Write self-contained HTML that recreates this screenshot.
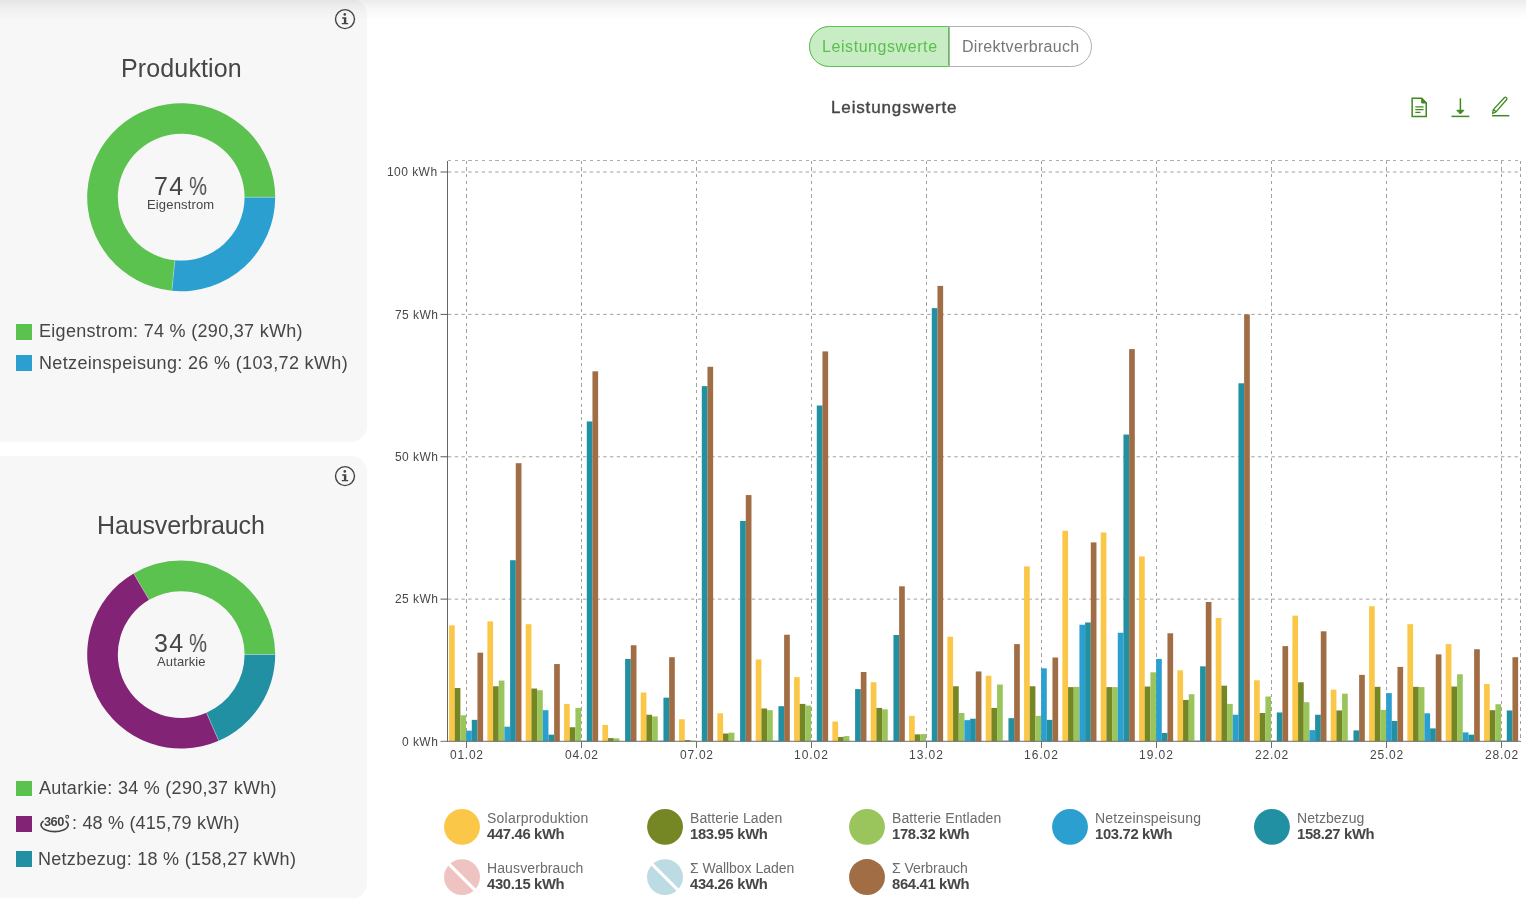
<!DOCTYPE html>
<html lang="de"><head><meta charset="utf-8"><title>Leistungswerte</title>
<style>
html,body{margin:0;padding:0;background:#fff;overflow:hidden;}
body{width:1526px;height:898px;overflow:hidden;position:relative;font-family:"Liberation Sans", Arial, sans-serif;}
.card{position:absolute;left:-20px;width:387px;background:#f7f7f7;border-radius:16px;}
.t{position:absolute;white-space:pre;line-height:normal;will-change:transform;}
.bm{display:inline-block;width:0;height:0;}
.info{position:absolute;}
svg{position:absolute;left:0;top:0;overflow:visible;}
.toggle{position:absolute;left:809px;top:26px;width:283px;height:41px;box-sizing:border-box;border:1px solid #b0b0b0;border-radius:20.5px;background:#fff;}
.toggle .on{position:absolute;left:-1px;top:-1px;width:140px;height:41px;box-sizing:border-box;border:1px solid #5bc04f;border-radius:20.5px 1.5px 1.5px 20.5px;background:#c8ecc3;}
.toggle .sep{position:absolute;left:139px;top:0;width:1px;height:39px;background:#b0b0b0;}
.topshade{position:absolute;left:0;top:0;width:100%;height:20px;background:linear-gradient(rgba(0,0,0,0.08),rgba(0,0,0,0.045) 30%,rgba(0,0,0,0.02) 60%,rgba(0,0,0,0));}
.sq{position:absolute;left:16px;width:16px;height:16px;}
</style></head><body>
<div class="card" style="top:-1px;height:443px"></div>
<div class="card" style="top:456px;height:443px"></div>
<div class="toggle"><div class="on"></div><div class="sep"></div></div>

<svg width="1526" height="898" viewBox="0 0 1526 898">
<g id="donut1">
<path d="M275.20,197.20 A94,94 0 1 0 171.86,290.74 L174.90,260.29 A63.4,63.4 0 1 1 244.60,197.20 Z" fill="#5bc14f"/>
<path d="M171.86,290.74 A94,94 0 0 0 275.20,197.20 L244.60,197.20 A63.4,63.4 0 0 1 174.90,260.29 Z" fill="#2b9fcf"/>
<line x1="244.60" y1="197.20" x2="275.20" y2="197.20" stroke="#fff" stroke-opacity="0.3" stroke-width="1"/>
<line x1="174.90" y1="260.29" x2="171.86" y2="290.74" stroke="#fff" stroke-opacity="0.3" stroke-width="1"/>
</g>
<g id="donut2">
<path d="M275.20,654.55 A94,94 0 0 0 133.63,573.47 L149.12,599.87 A63.4,63.4 0 0 1 244.60,654.55 Z" fill="#5bc14f"/>
<path d="M133.63,573.47 A94,94 0 0 0 218.68,740.75 L206.48,712.69 A63.4,63.4 0 0 1 149.12,599.87 Z" fill="#832375"/>
<path d="M218.68,740.75 A94,94 0 0 0 275.20,654.55 L244.60,654.55 A63.4,63.4 0 0 1 206.48,712.69 Z" fill="#2190a2"/>
<line x1="244.60" y1="654.55" x2="275.20" y2="654.55" stroke="#fff" stroke-opacity="0.3" stroke-width="1"/>
<line x1="149.12" y1="599.87" x2="133.63" y2="573.47" stroke="#fff" stroke-opacity="0.3" stroke-width="1"/>
<line x1="206.48" y1="712.69" x2="218.68" y2="740.75" stroke="#fff" stroke-opacity="0.3" stroke-width="1"/>
</g>
<g id="grid">
<g>
<line x1="448.0" x2="1520.5" y1="599.12" y2="599.12" stroke="#a0a0a0" stroke-dasharray="3.375,3.375"/>
<line x1="448.0" x2="1520.5" y1="456.75" y2="456.75" stroke="#a0a0a0" stroke-dasharray="3.375,3.375"/>
<line x1="448.0" x2="1520.5" y1="314.38" y2="314.38" stroke="#a0a0a0" stroke-dasharray="3.375,3.375"/>
<line x1="448.0" x2="1520.5" y1="172.00" y2="172.00" stroke="#a0a0a0" stroke-dasharray="3.375,3.375"/>
</g><g shape-rendering="crispEdges">
<line x1="448.0" x2="1520.5" y1="160.5" y2="160.5" stroke="#a0a0a0" stroke-opacity="0.85" stroke-dasharray="3.375,3.375"/>
<line x1="1520.5" x2="1520.5" y1="160.5" y2="741.5" stroke="#a0a0a0" stroke-dasharray="3.375,3.375"/>
<line x1="466.50" x2="466.50" y1="160.5" y2="741.5" stroke="#a0a0a0" stroke-dasharray="3.375,3.375"/>
<line x1="581.50" x2="581.50" y1="160.5" y2="741.5" stroke="#a0a0a0" stroke-dasharray="3.375,3.375"/>
<line x1="696.50" x2="696.50" y1="160.5" y2="741.5" stroke="#a0a0a0" stroke-dasharray="3.375,3.375"/>
<line x1="811.50" x2="811.50" y1="160.5" y2="741.5" stroke="#a0a0a0" stroke-dasharray="3.375,3.375"/>
<line x1="926.50" x2="926.50" y1="160.5" y2="741.5" stroke="#a0a0a0" stroke-dasharray="3.375,3.375"/>
<line x1="1041.50" x2="1041.50" y1="160.5" y2="741.5" stroke="#a0a0a0" stroke-dasharray="3.375,3.375"/>
<line x1="1156.50" x2="1156.50" y1="160.5" y2="741.5" stroke="#a0a0a0" stroke-dasharray="3.375,3.375"/>
<line x1="1271.50" x2="1271.50" y1="160.5" y2="741.5" stroke="#a0a0a0" stroke-dasharray="3.375,3.375"/>
<line x1="1386.50" x2="1386.50" y1="160.5" y2="741.5" stroke="#a0a0a0" stroke-dasharray="3.375,3.375"/>
<line x1="1501.50" x2="1501.50" y1="160.5" y2="741.5" stroke="#a0a0a0" stroke-dasharray="3.375,3.375"/>
</g>
</g>
<g id="bars">
<rect x="449.06" y="625.32" width="5.68" height="116.18" fill="#fac748"/>
<rect x="454.74" y="687.97" width="5.68" height="53.53" fill="#758725"/>
<rect x="460.42" y="715.30" width="5.68" height="26.20" fill="#99c55c"/>
<rect x="466.10" y="730.68" width="5.68" height="10.82" fill="#2b9fcf"/>
<rect x="471.78" y="719.86" width="5.68" height="21.64" fill="#2190a2"/>
<rect x="477.46" y="652.66" width="5.68" height="88.84" fill="#a06d45"/>
<rect x="487.39" y="621.34" width="5.68" height="120.16" fill="#fac748"/>
<rect x="493.07" y="686.26" width="5.68" height="55.24" fill="#758725"/>
<rect x="498.75" y="680.56" width="5.68" height="60.94" fill="#99c55c"/>
<rect x="504.43" y="726.69" width="5.68" height="14.81" fill="#2b9fcf"/>
<rect x="510.11" y="560.23" width="5.68" height="181.27" fill="#2190a2"/>
<rect x="515.79" y="463.19" width="5.68" height="278.31" fill="#a06d45"/>
<rect x="525.73" y="624.18" width="5.68" height="117.32" fill="#fac748"/>
<rect x="531.41" y="688.54" width="5.68" height="52.96" fill="#758725"/>
<rect x="537.09" y="690.25" width="5.68" height="51.25" fill="#99c55c"/>
<rect x="542.77" y="710.18" width="5.68" height="31.32" fill="#2b9fcf"/>
<rect x="548.45" y="734.67" width="5.68" height="6.83" fill="#2190a2"/>
<rect x="554.13" y="664.05" width="5.68" height="77.45" fill="#a06d45"/>
<rect x="564.06" y="703.91" width="5.68" height="37.59" fill="#fac748"/>
<rect x="569.74" y="727.26" width="5.68" height="14.24" fill="#758725"/>
<rect x="575.42" y="707.90" width="5.68" height="33.60" fill="#99c55c"/>
<rect x="581.10" y="740.65" width="5.68" height="0.85" fill="#2b9fcf"/>
<rect x="586.78" y="421.44" width="5.68" height="320.06" fill="#2190a2"/>
<rect x="592.46" y="371.32" width="5.68" height="370.18" fill="#a06d45"/>
<rect x="602.39" y="724.98" width="5.68" height="16.52" fill="#fac748"/>
<rect x="608.07" y="738.08" width="5.68" height="3.42" fill="#758725"/>
<rect x="613.75" y="738.37" width="5.68" height="3.13" fill="#99c55c"/>
<rect x="625.11" y="658.92" width="5.68" height="82.58" fill="#2190a2"/>
<rect x="630.79" y="645.25" width="5.68" height="96.25" fill="#a06d45"/>
<rect x="640.73" y="692.52" width="5.68" height="48.98" fill="#fac748"/>
<rect x="646.41" y="714.73" width="5.68" height="26.77" fill="#758725"/>
<rect x="652.09" y="716.44" width="5.68" height="25.06" fill="#99c55c"/>
<rect x="657.77" y="740.65" width="5.68" height="0.85" fill="#2b9fcf"/>
<rect x="663.45" y="697.65" width="5.68" height="43.85" fill="#2190a2"/>
<rect x="669.13" y="657.21" width="5.68" height="84.29" fill="#a06d45"/>
<rect x="679.06" y="719.29" width="5.68" height="22.21" fill="#fac748"/>
<rect x="684.74" y="740.08" width="5.68" height="1.42" fill="#758725"/>
<rect x="690.42" y="740.65" width="5.68" height="0.85" fill="#99c55c"/>
<rect x="701.78" y="386.13" width="5.68" height="355.37" fill="#2190a2"/>
<rect x="707.46" y="366.77" width="5.68" height="374.73" fill="#a06d45"/>
<rect x="717.39" y="713.31" width="5.68" height="28.19" fill="#fac748"/>
<rect x="723.07" y="733.53" width="5.68" height="7.97" fill="#758725"/>
<rect x="728.75" y="732.67" width="5.68" height="8.83" fill="#99c55c"/>
<rect x="740.11" y="520.93" width="5.68" height="220.57" fill="#2190a2"/>
<rect x="745.79" y="495.08" width="5.68" height="246.42" fill="#a06d45"/>
<rect x="755.73" y="659.49" width="5.68" height="82.01" fill="#fac748"/>
<rect x="761.41" y="708.47" width="5.68" height="33.03" fill="#758725"/>
<rect x="767.09" y="710.18" width="5.68" height="31.32" fill="#99c55c"/>
<rect x="772.77" y="740.65" width="5.68" height="0.85" fill="#2b9fcf"/>
<rect x="778.45" y="706.19" width="5.68" height="35.31" fill="#2190a2"/>
<rect x="784.13" y="634.72" width="5.68" height="106.78" fill="#a06d45"/>
<rect x="794.06" y="677.15" width="5.68" height="64.35" fill="#fac748"/>
<rect x="799.74" y="703.91" width="5.68" height="37.59" fill="#758725"/>
<rect x="805.42" y="705.62" width="5.68" height="35.88" fill="#99c55c"/>
<rect x="811.10" y="740.65" width="5.68" height="0.85" fill="#2b9fcf"/>
<rect x="816.78" y="405.50" width="5.68" height="336.00" fill="#2190a2"/>
<rect x="822.46" y="351.39" width="5.68" height="390.11" fill="#a06d45"/>
<rect x="832.39" y="721.57" width="5.68" height="19.93" fill="#fac748"/>
<rect x="838.07" y="736.94" width="5.68" height="4.56" fill="#758725"/>
<rect x="843.75" y="736.09" width="5.68" height="5.41" fill="#99c55c"/>
<rect x="855.11" y="689.11" width="5.68" height="52.39" fill="#2190a2"/>
<rect x="860.79" y="672.02" width="5.68" height="69.48" fill="#a06d45"/>
<rect x="870.73" y="682.27" width="5.68" height="59.23" fill="#fac748"/>
<rect x="876.41" y="707.90" width="5.68" height="33.60" fill="#758725"/>
<rect x="882.09" y="709.32" width="5.68" height="32.18" fill="#99c55c"/>
<rect x="887.77" y="740.65" width="5.68" height="0.85" fill="#2b9fcf"/>
<rect x="893.45" y="635.00" width="5.68" height="106.50" fill="#2190a2"/>
<rect x="899.13" y="586.31" width="5.68" height="155.19" fill="#a06d45"/>
<rect x="909.06" y="715.87" width="5.68" height="25.63" fill="#fac748"/>
<rect x="914.74" y="734.38" width="5.68" height="7.12" fill="#758725"/>
<rect x="920.42" y="734.10" width="5.68" height="7.40" fill="#99c55c"/>
<rect x="926.10" y="740.65" width="5.68" height="0.85" fill="#2b9fcf"/>
<rect x="931.78" y="308.11" width="5.68" height="433.39" fill="#2190a2"/>
<rect x="937.46" y="285.90" width="5.68" height="455.60" fill="#a06d45"/>
<rect x="947.39" y="636.71" width="5.68" height="104.79" fill="#fac748"/>
<rect x="953.07" y="686.26" width="5.68" height="55.24" fill="#758725"/>
<rect x="958.75" y="713.02" width="5.68" height="28.48" fill="#99c55c"/>
<rect x="964.43" y="720.14" width="5.68" height="21.36" fill="#2b9fcf"/>
<rect x="970.11" y="718.72" width="5.68" height="22.78" fill="#2190a2"/>
<rect x="975.79" y="671.45" width="5.68" height="70.05" fill="#a06d45"/>
<rect x="985.73" y="675.72" width="5.68" height="65.78" fill="#fac748"/>
<rect x="991.41" y="707.90" width="5.68" height="33.60" fill="#758725"/>
<rect x="997.09" y="684.55" width="5.68" height="56.95" fill="#99c55c"/>
<rect x="1002.77" y="740.65" width="5.68" height="0.85" fill="#2b9fcf"/>
<rect x="1008.45" y="718.15" width="5.68" height="23.35" fill="#2190a2"/>
<rect x="1014.13" y="644.12" width="5.68" height="97.38" fill="#a06d45"/>
<rect x="1024.06" y="566.38" width="5.68" height="175.12" fill="#fac748"/>
<rect x="1029.74" y="686.26" width="5.68" height="55.24" fill="#758725"/>
<rect x="1035.42" y="715.87" width="5.68" height="25.63" fill="#99c55c"/>
<rect x="1041.10" y="668.32" width="5.68" height="73.18" fill="#2b9fcf"/>
<rect x="1046.78" y="719.86" width="5.68" height="21.64" fill="#2190a2"/>
<rect x="1052.46" y="657.50" width="5.68" height="84.00" fill="#a06d45"/>
<rect x="1062.39" y="530.78" width="5.68" height="210.72" fill="#fac748"/>
<rect x="1068.07" y="687.11" width="5.68" height="54.39" fill="#758725"/>
<rect x="1073.75" y="686.83" width="5.68" height="54.67" fill="#99c55c"/>
<rect x="1079.43" y="624.75" width="5.68" height="116.75" fill="#2b9fcf"/>
<rect x="1085.11" y="622.47" width="5.68" height="119.03" fill="#2190a2"/>
<rect x="1090.79" y="542.40" width="5.68" height="199.10" fill="#a06d45"/>
<rect x="1100.73" y="532.49" width="5.68" height="209.01" fill="#fac748"/>
<rect x="1106.41" y="687.11" width="5.68" height="54.39" fill="#758725"/>
<rect x="1112.09" y="687.11" width="5.68" height="54.39" fill="#99c55c"/>
<rect x="1117.77" y="632.73" width="5.68" height="108.77" fill="#2b9fcf"/>
<rect x="1123.45" y="434.54" width="5.68" height="306.96" fill="#2190a2"/>
<rect x="1129.13" y="349.11" width="5.68" height="392.39" fill="#a06d45"/>
<rect x="1139.06" y="556.41" width="5.68" height="185.09" fill="#fac748"/>
<rect x="1144.74" y="686.54" width="5.68" height="54.96" fill="#758725"/>
<rect x="1150.42" y="672.31" width="5.68" height="69.19" fill="#99c55c"/>
<rect x="1156.10" y="658.92" width="5.68" height="82.58" fill="#2b9fcf"/>
<rect x="1161.78" y="732.96" width="5.68" height="8.54" fill="#2190a2"/>
<rect x="1167.46" y="633.29" width="5.68" height="108.21" fill="#a06d45"/>
<rect x="1177.39" y="670.31" width="5.68" height="71.19" fill="#fac748"/>
<rect x="1183.07" y="699.93" width="5.68" height="41.57" fill="#758725"/>
<rect x="1188.75" y="694.23" width="5.68" height="47.27" fill="#99c55c"/>
<rect x="1194.43" y="740.65" width="5.68" height="0.85" fill="#2b9fcf"/>
<rect x="1200.11" y="666.33" width="5.68" height="75.17" fill="#2190a2"/>
<rect x="1205.79" y="601.97" width="5.68" height="139.53" fill="#a06d45"/>
<rect x="1215.73" y="617.92" width="5.68" height="123.58" fill="#fac748"/>
<rect x="1221.41" y="685.69" width="5.68" height="55.81" fill="#758725"/>
<rect x="1227.09" y="703.91" width="5.68" height="37.59" fill="#99c55c"/>
<rect x="1232.77" y="714.73" width="5.68" height="26.77" fill="#2b9fcf"/>
<rect x="1238.45" y="383.28" width="5.68" height="358.22" fill="#2190a2"/>
<rect x="1244.13" y="314.38" width="5.68" height="427.12" fill="#a06d45"/>
<rect x="1254.06" y="680.28" width="5.68" height="61.22" fill="#fac748"/>
<rect x="1259.74" y="713.02" width="5.68" height="28.48" fill="#758725"/>
<rect x="1265.42" y="696.51" width="5.68" height="44.99" fill="#99c55c"/>
<rect x="1271.10" y="740.65" width="5.68" height="0.85" fill="#2b9fcf"/>
<rect x="1276.78" y="712.46" width="5.68" height="29.04" fill="#2190a2"/>
<rect x="1282.46" y="646.11" width="5.68" height="95.39" fill="#a06d45"/>
<rect x="1292.39" y="615.64" width="5.68" height="125.86" fill="#fac748"/>
<rect x="1298.07" y="682.27" width="5.68" height="59.23" fill="#758725"/>
<rect x="1303.75" y="702.20" width="5.68" height="39.30" fill="#99c55c"/>
<rect x="1309.43" y="730.11" width="5.68" height="11.39" fill="#2b9fcf"/>
<rect x="1315.11" y="714.73" width="5.68" height="26.77" fill="#2190a2"/>
<rect x="1320.79" y="631.30" width="5.68" height="110.20" fill="#a06d45"/>
<rect x="1330.73" y="689.68" width="5.68" height="51.82" fill="#fac748"/>
<rect x="1336.41" y="710.46" width="5.68" height="31.04" fill="#758725"/>
<rect x="1342.09" y="693.66" width="5.68" height="47.84" fill="#99c55c"/>
<rect x="1347.77" y="740.65" width="5.68" height="0.85" fill="#2b9fcf"/>
<rect x="1353.45" y="730.39" width="5.68" height="11.11" fill="#2190a2"/>
<rect x="1359.13" y="674.87" width="5.68" height="66.63" fill="#a06d45"/>
<rect x="1369.06" y="606.24" width="5.68" height="135.26" fill="#fac748"/>
<rect x="1374.74" y="686.83" width="5.68" height="54.67" fill="#758725"/>
<rect x="1380.42" y="709.89" width="5.68" height="31.61" fill="#99c55c"/>
<rect x="1386.10" y="693.09" width="5.68" height="48.41" fill="#2b9fcf"/>
<rect x="1391.78" y="721.00" width="5.68" height="20.50" fill="#2190a2"/>
<rect x="1397.46" y="666.90" width="5.68" height="74.60" fill="#a06d45"/>
<rect x="1407.39" y="624.18" width="5.68" height="117.32" fill="#fac748"/>
<rect x="1413.07" y="686.83" width="5.68" height="54.67" fill="#758725"/>
<rect x="1418.75" y="687.11" width="5.68" height="54.39" fill="#99c55c"/>
<rect x="1424.43" y="713.31" width="5.68" height="28.19" fill="#2b9fcf"/>
<rect x="1430.11" y="728.40" width="5.68" height="13.10" fill="#2190a2"/>
<rect x="1435.79" y="654.37" width="5.68" height="87.13" fill="#a06d45"/>
<rect x="1445.73" y="644.12" width="5.68" height="97.38" fill="#fac748"/>
<rect x="1451.41" y="686.54" width="5.68" height="54.96" fill="#758725"/>
<rect x="1457.09" y="674.30" width="5.68" height="67.20" fill="#99c55c"/>
<rect x="1462.77" y="732.39" width="5.68" height="9.11" fill="#2b9fcf"/>
<rect x="1468.45" y="734.67" width="5.68" height="6.83" fill="#2190a2"/>
<rect x="1474.13" y="649.24" width="5.68" height="92.26" fill="#a06d45"/>
<rect x="1484.06" y="683.98" width="5.68" height="57.52" fill="#fac748"/>
<rect x="1489.74" y="710.18" width="5.68" height="31.32" fill="#758725"/>
<rect x="1495.42" y="704.20" width="5.68" height="37.30" fill="#99c55c"/>
<rect x="1501.10" y="740.65" width="5.68" height="0.85" fill="#2b9fcf"/>
<rect x="1506.78" y="710.46" width="5.68" height="31.04" fill="#2190a2"/>
<rect x="1512.46" y="657.21" width="5.68" height="84.29" fill="#a06d45"/>
</g>
<g id="axes">
<g shape-rendering="crispEdges">
<line x1="447.5" x2="447.5" y1="160.5" y2="742.0" stroke="#666"/>
<line x1="466.50" x2="466.50" y1="741.5" y2="748.0" stroke="#6e6e6e"/>
<line x1="581.50" x2="581.50" y1="741.5" y2="748.0" stroke="#6e6e6e"/>
<line x1="696.50" x2="696.50" y1="741.5" y2="748.0" stroke="#6e6e6e"/>
<line x1="811.50" x2="811.50" y1="741.5" y2="748.0" stroke="#6e6e6e"/>
<line x1="926.50" x2="926.50" y1="741.5" y2="748.0" stroke="#6e6e6e"/>
<line x1="1041.50" x2="1041.50" y1="741.5" y2="748.0" stroke="#6e6e6e"/>
<line x1="1156.50" x2="1156.50" y1="741.5" y2="748.0" stroke="#6e6e6e"/>
<line x1="1271.50" x2="1271.50" y1="741.5" y2="748.0" stroke="#6e6e6e"/>
<line x1="1386.50" x2="1386.50" y1="741.5" y2="748.0" stroke="#6e6e6e"/>
<line x1="1501.50" x2="1501.50" y1="741.5" y2="748.0" stroke="#6e6e6e"/>
</g><g>
<line x1="440.5" x2="1520.5" y1="741.3" y2="741.3" stroke="#707070"/>
<line x1="440.5" x2="447.5" y1="599.12" y2="599.12" stroke="#5a5a5a"/>
<line x1="440.5" x2="447.5" y1="456.75" y2="456.75" stroke="#5a5a5a"/>
<line x1="440.5" x2="447.5" y1="314.38" y2="314.38" stroke="#5a5a5a"/>
<line x1="440.5" x2="447.5" y1="172.00" y2="172.00" stroke="#5a5a5a"/>
</g>
</g>
<g id="legend">
<circle cx="462.00" cy="826.85" r="17.95" fill="#fac748"/>
<circle cx="665.05" cy="826.85" r="17.95" fill="#758725"/>
<circle cx="867.00" cy="826.85" r="17.95" fill="#99c55c"/>
<circle cx="1070.00" cy="826.85" r="17.95" fill="#2b9fcf"/>
<circle cx="1271.96" cy="826.85" r="17.95" fill="#2190a2"/>
<g><circle cx="462.0" cy="877.1" r="17.95" fill="#f0c3c3"/><line x1="449.0" y1="864.1" x2="475.0" y2="890.1" stroke="#fff" stroke-width="3.2"/></g>
<g><circle cx="665.0" cy="877.1" r="17.95" fill="#bcdbe2"/><line x1="652.0" y1="864.1" x2="678.0" y2="890.1" stroke="#fff" stroke-width="3.2"/></g>
<circle cx="867.00" cy="877.05" r="17.95" fill="#a06d45"/>
</g>
<g id="icons" fill="none" stroke="#3f8a1e" stroke-width="1.5">
<path d="M1412.15 98.15 H1421.7 L1426.25 103 V116.5 H1412.15 Z"/>
<path d="M1421.7 98.15 V103 H1426.25 Z" fill="#3f8a1e" stroke-width="1"/>
<path d="M1415.3 106.8 H1423.6 M1415.3 109.6 H1423.6 M1415.3 112.4 H1420.5" stroke-width="1.2"/>
<path d="M1460.4 98.3 V111"/>
<path d="M1456.8 110.3 H1464 L1460.4 114 Z" fill="#3f8a1e" stroke-width="1"/>
<path d="M1451.5 116.4 H1469.3"/>
<path d="M1492 115.7 H1509.3"/>
<path d="M1492.6 113.5 L1493.3 109.6 L1504.3 97.7 A1.5 1.5 0 0 1 1506.5 99.8 L1496.0 111.9 Z M1493.5 109.5 L1496.1 111.7" stroke-width="1.3" stroke-linejoin="round"/>
</g>
<g id="i360" fill="none" stroke="#464646" stroke-width="1.6" stroke-linecap="round">
<path d="M43.1 821.3 A13.6 6.7 0 1 0 66.1 821.3"/>
<circle cx="67.2" cy="816.8" r="1.45" stroke-width="1.1"/>
</g>
</svg>
<span class="t" style="left:44.3px;top:813.9px;font-size:12.8px;font-weight:700;color:#464646;letter-spacing:-0.55px">360</span>

<div class="sq" style="top:324px;background:#5bc14f"></div>
<div class="sq" style="top:355px;background:#2b9fcf"></div>
<div class="sq" style="top:781px;height:15px;background:#5bc14f"></div>
<div class="sq" style="top:816px;background:#832375"></div>
<div class="sq" style="top:851px;background:#2190a2"></div>
<svg class="info" style="left:333.9px;top:7.7px" width="22" height="22" viewBox="0 0 22 22"><circle cx="11" cy="11.1" r="9.5" fill="none" stroke="#444" stroke-width="1.4"/><circle cx="10.8" cy="6.4" r="1.3" fill="#444"/><path d="M8.2 9.3 H12.3 V15 H14.2 V16.15 H7.8 V15 H9.9 V10.7 H8.2 Z" fill="#444"/></svg>
<svg class="info" style="left:333.9px;top:464.9px" width="22" height="22" viewBox="0 0 22 22"><circle cx="11" cy="11.1" r="9.5" fill="none" stroke="#444" stroke-width="1.4"/><circle cx="10.8" cy="6.4" r="1.3" fill="#444"/><path d="M8.2 9.3 H12.3 V15 H14.2 V16.15 H7.8 V15 H9.9 V10.7 H8.2 Z" fill="#444"/></svg>
<section aria-label="Produktion">
<span class="t" id="t0" style="left:120.96px;top:54.00px;font-size:25px;font-weight:400;color:#464646;letter-spacing:0.134px;">Produktion<i class="bm"></i></span>
<span class="t" id="t1" style="left:154.26px;top:172.00px;font-size:25px;font-weight:400;color:#464646;letter-spacing:1.230px;">74<i class="bm"></i></span>
<span class="t" id="t2" style="left:189.25px;top:172.00px;font-size:25px;font-weight:400;color:#464646;transform:scaleX(0.8108);transform-origin:0 0;">%<i class="bm"></i></span>
<span class="t" id="t3" style="left:146.77px;top:197.00px;font-size:13px;font-weight:400;color:#464646;letter-spacing:0.157px;">Eigenstrom<i class="bm"></i></span>
<span class="t" id="t4" style="left:38.54px;top:321.00px;font-size:18px;font-weight:400;color:#464646;letter-spacing:0.303px;">Eigenstrom: 74 % (290,37 kWh)<i class="bm"></i></span>
<span class="t" id="t5" style="left:38.52px;top:353.00px;font-size:18px;font-weight:400;color:#464646;letter-spacing:0.348px;">Netzeinspeisung: 26 % (103,72 kWh)<i class="bm"></i></span>
</section>
<section aria-label="Hausverbrauch">
<span class="t" id="t6" style="left:97.22px;top:511.00px;font-size:25px;font-weight:400;color:#464646;letter-spacing:-0.144px;">Hausverbrauch<i class="bm"></i></span>
<span class="t" id="t7" style="left:154.37px;top:629.00px;font-size:25px;font-weight:400;color:#464646;letter-spacing:1.227px;">34<i class="bm"></i></span>
<span class="t" id="t8" style="left:189.25px;top:629.00px;font-size:25px;font-weight:400;color:#464646;transform:scaleX(0.8108);transform-origin:0 0;">%<i class="bm"></i></span>
<span class="t" id="t9" style="left:156.70px;top:654.00px;font-size:13px;font-weight:400;color:#464646;letter-spacing:0.128px;">Autarkie<i class="bm"></i></span>
<span class="t" id="t10" style="left:38.79px;top:778.00px;font-size:18px;font-weight:400;color:#464646;letter-spacing:0.285px;">Autarkie: 34 % (290,37 kWh)<i class="bm"></i></span>
<span class="t" id="t11" style="left:71.57px;top:813.00px;font-size:18px;font-weight:400;color:#464646;letter-spacing:0.194px;">: 48 % (415,79 kWh)<i class="bm"></i></span>
<span class="t" id="t12" style="left:37.90px;top:849.00px;font-size:18px;font-weight:400;color:#464646;letter-spacing:0.287px;">Netzbezug: 18 % (158,27 kWh)<i class="bm"></i></span>
</section>
<nav aria-label="Ansicht">
<span class="t" id="t13" style="left:822.27px;top:38.00px;font-size:16px;font-weight:400;color:#5bbf4e;letter-spacing:0.570px;">Leistungswerte<i class="bm"></i></span>
<span class="t" id="t14" style="left:961.69px;top:38.00px;font-size:16px;font-weight:400;color:#777777;letter-spacing:0.306px;">Direktverbrauch<i class="bm"></i></span>
</nav>
<header aria-label="Diagrammtitel">
<span class="t" id="t15" style="left:831.36px;top:97.70px;font-size:17px;font-weight:400;color:#464646;-webkit-text-stroke:0.4px #464646;letter-spacing:0.858px;">Leistungswerte<i class="bm"></i></span>
</header>
<div aria-label="Y-Achse">
<span class="t" id="t16" style="left:387.48px;top:165.20px;font-size:12px;font-weight:400;color:#464646;letter-spacing:0.45px;">100 kWh<i class="bm"></i></span>
<span class="t" id="t17" style="left:394.61px;top:307.57px;font-size:12px;font-weight:400;color:#464646;letter-spacing:0.45px;">75 kWh<i class="bm"></i></span>
<span class="t" id="t18" style="left:394.61px;top:449.95px;font-size:12px;font-weight:400;color:#464646;letter-spacing:0.45px;">50 kWh<i class="bm"></i></span>
<span class="t" id="t19" style="left:394.61px;top:592.33px;font-size:12px;font-weight:400;color:#464646;letter-spacing:0.45px;">25 kWh<i class="bm"></i></span>
<span class="t" id="t20" style="left:401.73px;top:734.70px;font-size:12px;font-weight:400;color:#464646;letter-spacing:0.45px;">0 kWh<i class="bm"></i></span>
</div>
<div aria-label="X-Achse">
<span class="t" id="t21" style="left:449.78px;top:748.00px;font-size:12px;font-weight:400;color:#464646;letter-spacing:0.744px;">01.02<i class="bm"></i></span>
<span class="t" id="t22" style="left:564.78px;top:748.00px;font-size:12px;font-weight:400;color:#464646;letter-spacing:0.744px;">04.02<i class="bm"></i></span>
<span class="t" id="t23" style="left:679.78px;top:748.00px;font-size:12px;font-weight:400;color:#464646;letter-spacing:0.744px;">07.02<i class="bm"></i></span>
<span class="t" id="t24" style="left:794.04px;top:748.00px;font-size:12px;font-weight:400;color:#464646;letter-spacing:0.977px;">10.02<i class="bm"></i></span>
<span class="t" id="t25" style="left:909.04px;top:748.00px;font-size:12px;font-weight:400;color:#464646;letter-spacing:0.977px;">13.02<i class="bm"></i></span>
<span class="t" id="t26" style="left:1024.04px;top:748.00px;font-size:12px;font-weight:400;color:#464646;letter-spacing:0.977px;">16.02<i class="bm"></i></span>
<span class="t" id="t27" style="left:1139.04px;top:748.00px;font-size:12px;font-weight:400;color:#464646;letter-spacing:0.977px;">19.02<i class="bm"></i></span>
<span class="t" id="t28" style="left:1254.69px;top:748.00px;font-size:12px;font-weight:400;color:#464646;letter-spacing:0.813px;">22.02<i class="bm"></i></span>
<span class="t" id="t29" style="left:1369.69px;top:748.00px;font-size:12px;font-weight:400;color:#464646;letter-spacing:0.813px;">25.02<i class="bm"></i></span>
<span class="t" id="t30" style="left:1484.69px;top:748.00px;font-size:12px;font-weight:400;color:#464646;letter-spacing:0.813px;">28.02<i class="bm"></i></span>
</div>
<footer aria-label="Legende">
<span class="t" id="t31" style="left:486.85px;top:810.00px;font-size:14px;font-weight:400;color:#6b6b6b;letter-spacing:0.231px;">Solarproduktion<i class="bm"></i></span>
<span class="t" id="t32" style="left:486.85px;top:826.00px;font-size:14.8px;font-weight:700;color:#464646;letter-spacing:-0.329px;">447.46 kWh<i class="bm"></i></span>
<span class="t" id="t33" style="left:689.90px;top:810.00px;font-size:14px;font-weight:400;color:#6b6b6b;letter-spacing:0.090px;">Batterie Laden<i class="bm"></i></span>
<span class="t" id="t34" style="left:689.90px;top:826.00px;font-size:14.8px;font-weight:700;color:#464646;letter-spacing:-0.309px;">183.95 kWh<i class="bm"></i></span>
<span class="t" id="t35" style="left:891.85px;top:810.00px;font-size:14px;font-weight:400;color:#6b6b6b;letter-spacing:0.119px;">Batterie Entladen<i class="bm"></i></span>
<span class="t" id="t36" style="left:891.85px;top:826.00px;font-size:14.8px;font-weight:700;color:#464646;letter-spacing:-0.330px;">178.32 kWh<i class="bm"></i></span>
<span class="t" id="t37" style="left:1094.85px;top:810.00px;font-size:14px;font-weight:400;color:#6b6b6b;letter-spacing:0.172px;">Netzeinspeisung<i class="bm"></i></span>
<span class="t" id="t38" style="left:1094.85px;top:826.00px;font-size:14.8px;font-weight:700;color:#464646;letter-spacing:-0.330px;">103.72 kWh<i class="bm"></i></span>
<span class="t" id="t39" style="left:1296.81px;top:810.00px;font-size:14px;font-weight:400;color:#6b6b6b;letter-spacing:0.043px;">Netzbezug<i class="bm"></i></span>
<span class="t" id="t40" style="left:1296.81px;top:826.00px;font-size:14.8px;font-weight:700;color:#464646;letter-spacing:-0.333px;">158.27 kWh<i class="bm"></i></span>
<span class="t" id="t41" style="left:486.85px;top:860.20px;font-size:14px;font-weight:400;color:#6b6b6b;letter-spacing:0.114px;">Hausverbrauch<i class="bm"></i></span>
<span class="t" id="t42" style="left:486.85px;top:876.20px;font-size:14.8px;font-weight:700;color:#464646;letter-spacing:-0.330px;">430.15 kWh<i class="bm"></i></span>
<span class="t" id="t43" style="left:689.90px;top:860.20px;font-size:14px;font-weight:400;color:#6b6b6b;letter-spacing:-0.028px;">Σ Wallbox Laden<i class="bm"></i></span>
<span class="t" id="t44" style="left:689.90px;top:876.20px;font-size:14.8px;font-weight:700;color:#464646;letter-spacing:-0.309px;">434.26 kWh<i class="bm"></i></span>
<span class="t" id="t45" style="left:891.85px;top:860.20px;font-size:14px;font-weight:400;color:#6b6b6b;letter-spacing:-0.051px;">Σ Verbrauch<i class="bm"></i></span>
<span class="t" id="t46" style="left:891.85px;top:876.20px;font-size:14.8px;font-weight:700;color:#464646;letter-spacing:-0.330px;">864.41 kWh<i class="bm"></i></span>
</footer>
<div class="topshade"></div>
</body></html>
